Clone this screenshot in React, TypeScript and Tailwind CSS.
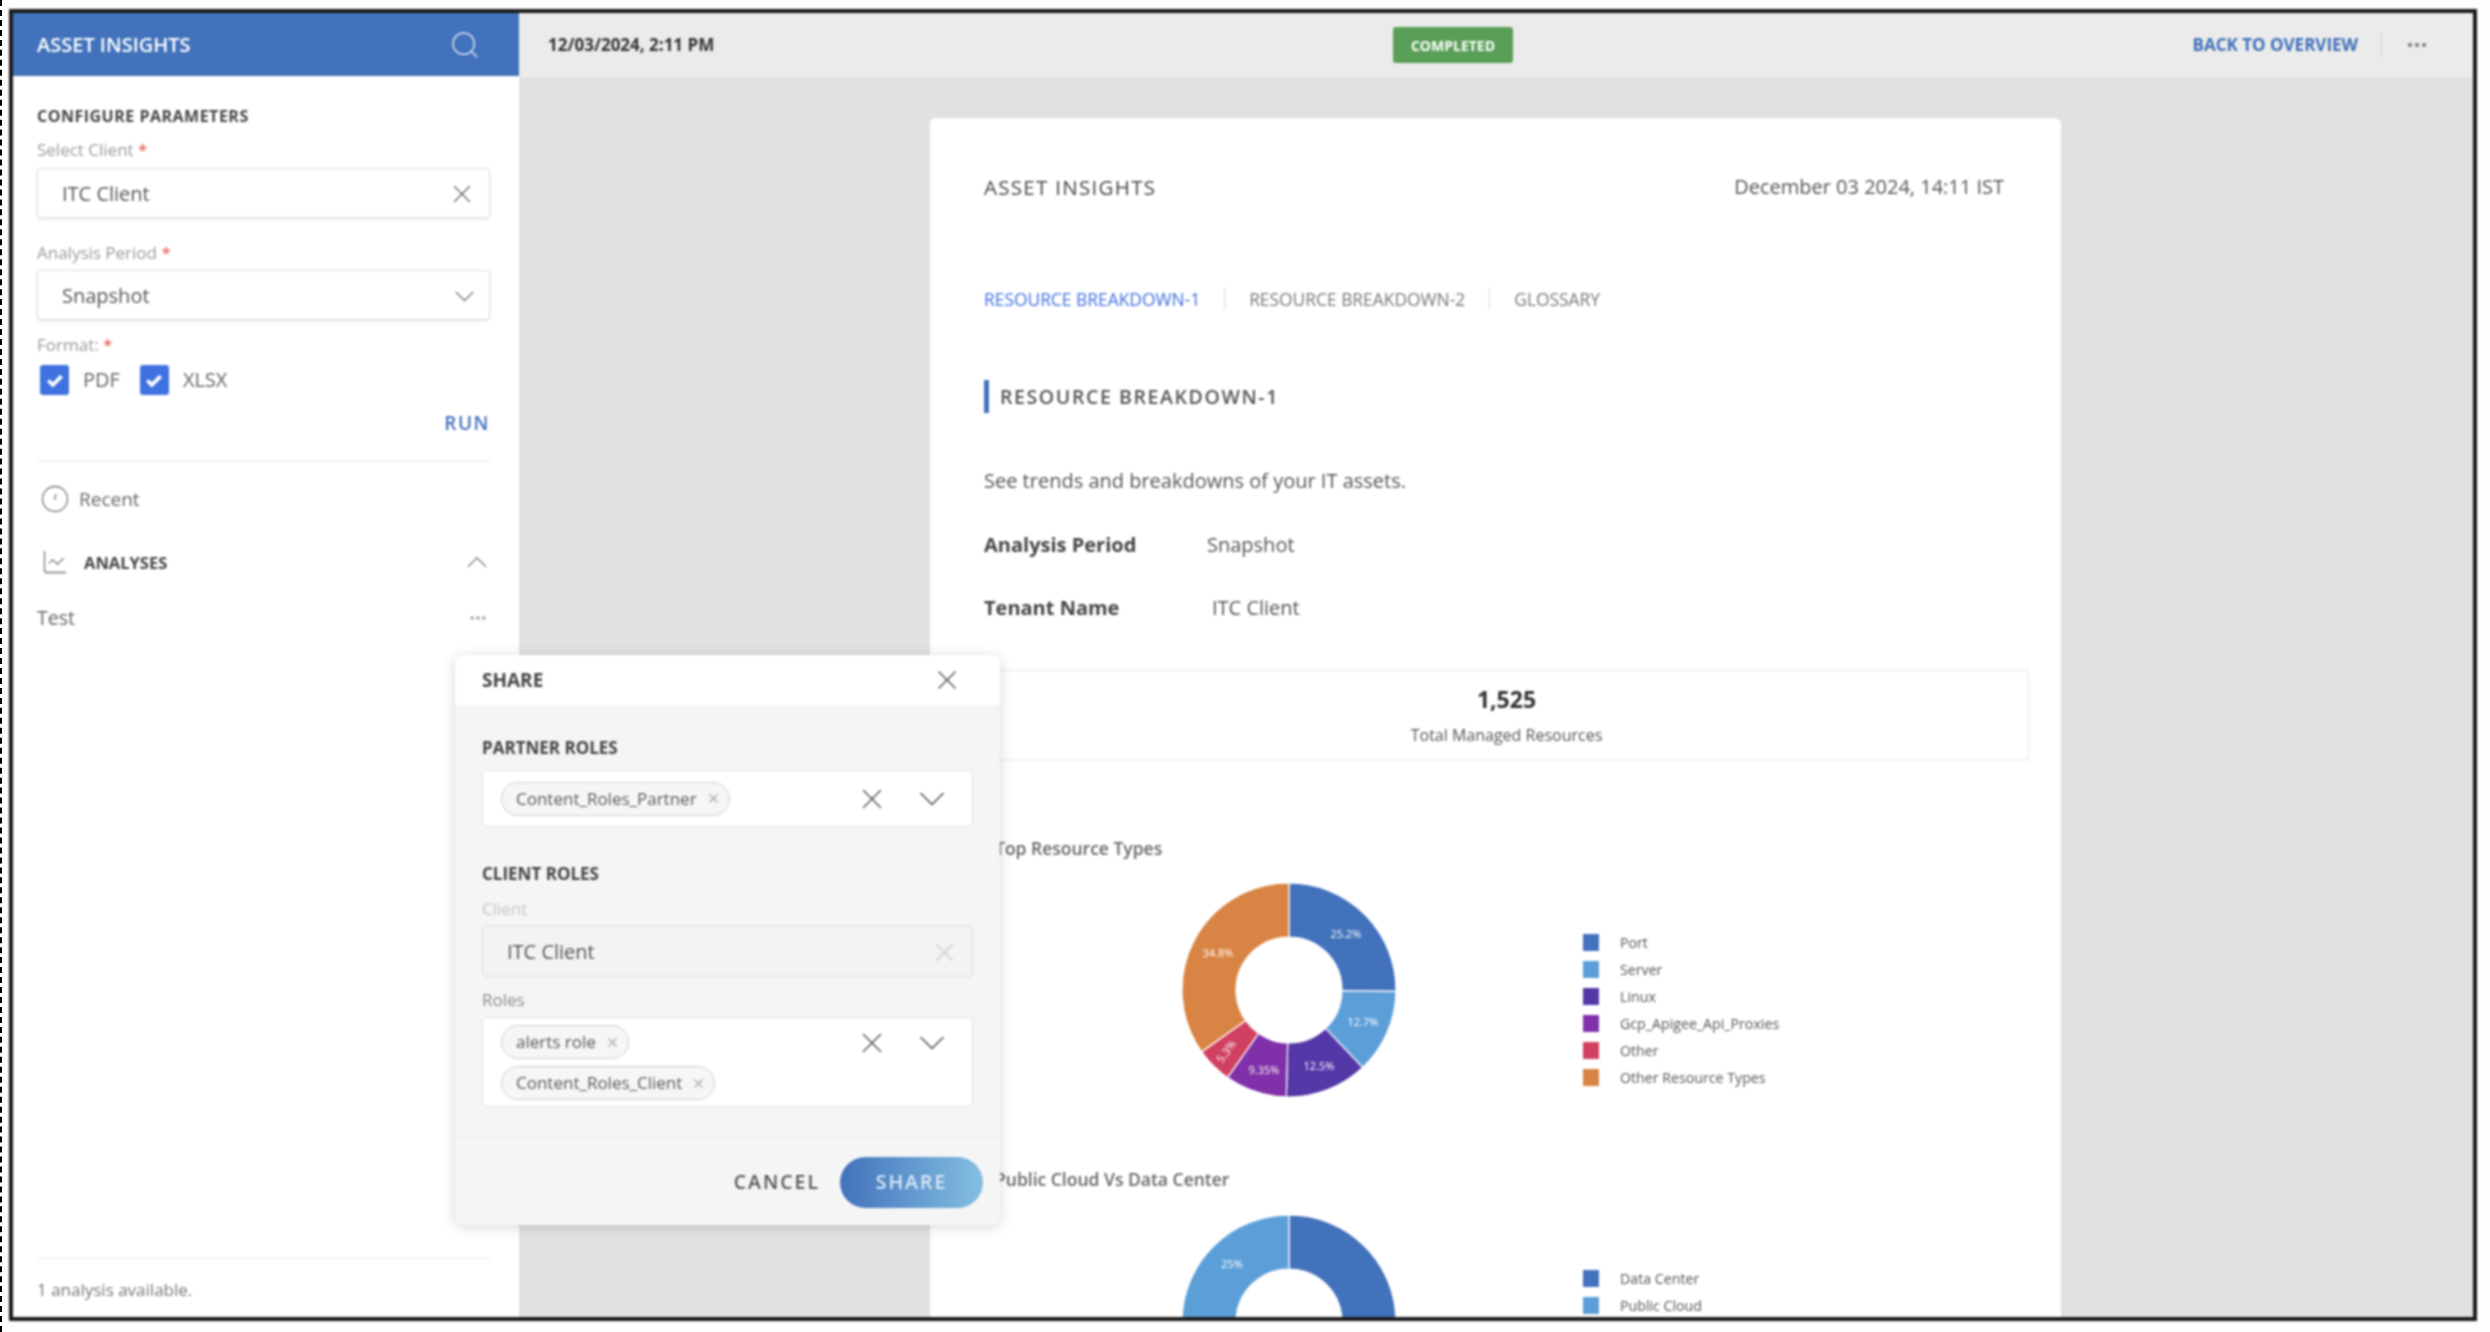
import { ChartLine, ChevronDown, ChevronUp, Ellipsis, Search, X } from "lucide-react";

interface Slice {
  value: number;
  color: string;
}

const TOP_TYPES: Slice[] = [
  { value: 25.2, color: "#4272bb" },
  { value: 12.7, color: "#5c9fd8" },
  { value: 12.5, color: "#5538a8" },
  { value: 9.35, color: "#8030a8" },
  { value: 5.45, color: "#d04060" },
  { value: 34.8, color: "#d88444" },
];

const CLOUD_TYPES: Slice[] = [
  { value: 75, color: "#4272bb" },
  { value: 25, color: "#5c9fd8" },
];

const TOP_LEGEND = [
  { label: "Port", color: "bg-[#4272bb]" },
  { label: "Server", color: "bg-[#5c9fd8]" },
  { label: "Linux", color: "bg-[#5538a8]" },
  { label: "Gcp_Apigee_Api_Proxies", color: "bg-[#8030a8]" },
  { label: "Other", color: "bg-[#d04060]" },
  { label: "Other Resource Types", color: "bg-[#d88444]" },
];

const CLOUD_LEGEND = [
  { label: "Data Center", color: "bg-[#4272bb]" },
  { label: "Public Cloud", color: "bg-[#5c9fd8]" },
];

function arcPath(start: number, end: number) {
  const toPoint = (pct: number, r: number) => {
    const a = (pct / 100) * Math.PI * 2;
    return `${(107 + r * Math.sin(a)).toFixed(2)} ${(107 - r * Math.cos(a)).toFixed(2)}`;
  };
  const large = end - start > 50 ? 1 : 0;
  return `M${toPoint(start, 107)}A107 107 0 ${large} 1 ${toPoint(end, 107)}L${toPoint(end, 53)}A53 53 0 ${large} 0 ${toPoint(start, 53)}Z`;
}

function Donut({ slices, labels }: { slices: Slice[]; labels: { x: number; y: number; text: string; rotate?: number }[] }) {
  let total = 0;
  return (
    <svg width="214" height="214" viewBox="0 0 214 214" className="shrink-0">
      {slices.map((s) => {
        const start = total;
        total += s.value;
        return <path key={s.color} d={arcPath(start, total)} fill={s.color} stroke="#fff" strokeWidth="1.2" />;
      })}
      {labels.map((l) => (
        <text
          key={l.text}
          x={l.x}
          y={l.y}
          fill="#fff"
          fontSize="11"
          textAnchor="middle"
          dominantBaseline="middle"
          transform={l.rotate ? `rotate(${l.rotate} ${l.x} ${l.y})` : undefined}
        >
          {l.text}
        </text>
      ))}
    </svg>
  );
}

function Legend({ items }: { items: { label: string; color: string }[] }) {
  return (
    <div>
      {items.map((item) => (
        <div key={item.label} className="flex h-[27px] items-center">
          <span className={`h-[17px] w-[16px] ${item.color}`} />
          <span className="ml-[21px] text-[14.2px] text-[#555]">{item.label}</span>
        </div>
      ))}
    </div>
  );
}

function Required({ label }: { label: string }) {
  return (
    <div className="text-[17px] leading-5 text-[#9a9a9a]">
      {label} <span className="text-[#e0483e]">*</span>
    </div>
  );
}

function Check({ label }: { label: string }) {
  return (
    <div className="flex items-center">
      <span className="flex h-[30px] w-[29px] items-center justify-center rounded-[3px] bg-[#3f72e0]">
        <svg width="22" height="22" viewBox="0 0 20 20" fill="none" stroke="#fff" strokeWidth="3.4">
          <path d="M4 10.5l4 4 8-8" />
        </svg>
      </span>
      <span className="ml-[14px] text-[20px] text-[#666]">{label}</span>
    </div>
  );
}

function Chip({ label }: { label: string }) {
  return (
    <span className="flex h-[34px] w-fit items-center rounded-full border border-[#cfcfcf] bg-[#f6f6f6] pl-[14px] pr-[8px] text-[17px] text-[#5a5a5a]">
      {label}
      <X size={15} strokeWidth={1.6} className="ml-[9px] text-[#666]" />
    </span>
  );
}

function Sidebar() {
  return (
    <aside className="flex w-[506px] shrink-0 flex-col bg-white">
      <div className="flex h-[63px] items-center justify-between bg-[#4272bb] pl-6 pr-[38px] text-white">
        <span className="text-[20px] font-semibold">ASSET INSIGHTS</span>
        <Search size={32} strokeWidth={1.1} className="text-[#d5e1f2]" />
      </div>
      <div className="flex flex-1 flex-col pl-6 pr-[29px] pt-[30px]">
        <div className="text-[16px] font-bold leading-5 tracking-[0.5px] text-[#444]">CONFIGURE PARAMETERS</div>
        <div className="mt-[14px]">
          <Required label="Select Client" />
        </div>
        <div className="mt-2 flex h-[50px] items-center justify-between rounded border border-[#dedede] pl-6 pr-[12px] pt-[2px] text-[20px] text-[#555] shadow-sm">
          ITC Client
          <X size={30} strokeWidth={1} className="text-[#666]" />
        </div>
        <div className="mt-[25px]">
          <Required label="Analysis Period" />
        </div>
        <div className="mt-[7px] flex h-[50px] items-center justify-between rounded border border-[#dedede] pl-6 pr-[8px] pt-[2px] text-[20px] text-[#555] shadow-sm">
          Snapshot
          <ChevronDown size={33} strokeWidth={1} className="text-[#666]" />
        </div>
        <div className="mt-[15px]">
          <Required label="Format:" />
        </div>
        <div className="ml-[3px] mt-[10px] flex h-[30px] items-center gap-[20px]">
          <Check label="PDF" />
          <Check label="XLSX" />
        </div>
        <div className="mt-[18px] text-right text-[19px] font-semibold leading-5 tracking-[1.5px] text-[#4272bb]">RUN</div>
        <div className="mt-[28px] h-px bg-[#e8e8e8]" />
        <div className="ml-1 mt-[21px] flex h-8 items-center text-[19px] text-[#666]">
          <svg width="28" height="28" viewBox="0 0 28 28" fill="none" stroke="#777" strokeWidth="1.3">
            <circle cx="14" cy="14" r="12.5" />
            <path d="M15 9l-1.5 6" />
          </svg>
          <span className="ml-[10px]">Recent</span>
        </div>
        <div className="ml-1 mt-[31px] flex h-8 items-center justify-between">
          <div className="flex items-center">
            <ChartLine size={28} strokeWidth={1.1} className="text-[#777]" />
            <span className="ml-[15px] pt-[2px] text-[16.5px] font-bold text-[#444]">ANALYSES</span>
          </div>
          <ChevronUp size={34} strokeWidth={1} className="-mr-[4px] text-[#888]" />
        </div>
        <div className="mt-[30px] flex h-5 items-center justify-between text-[19.5px] text-[#666]">
          Test
          <Ellipsis size={20} className="mr-[2px] text-[#999]" />
        </div>
        <div className="mt-auto border-t border-[#eaeaea] pb-[17px] pt-[21px] text-[17px] leading-5 text-[#777]">
          1 analysis available.
        </div>
      </div>
    </aside>
  );
}

function ReportCard() {
  return (
    <div className="ml-[411px] mt-[41px] w-[1131px] rounded-t-md bg-white pl-[54px] pr-8 pt-[59px] font-normal">
      <div className="flex h-5 items-center justify-between pr-[25px]">
        <span className="text-[20.5px] tracking-[1.3px] text-[#444]">ASSET INSIGHTS</span>
        <span className="text-[20px] text-[#555]">December 03 2024, 14:11 IST</span>
      </div>
      <div className="mt-[90px] flex h-6 items-center text-[17.4px] text-[#777]">
        <span className="text-[#3f6fe0]">RESOURCE BREAKDOWN-1</span>
        <span className="mx-[24px] h-[22px] w-px bg-[#d8d8d8]" />
        <span>RESOURCE BREAKDOWN-2</span>
        <span className="mx-[24px] h-[22px] w-px bg-[#d8d8d8]" />
        <span>GLOSSARY</span>
      </div>
      <div className="mt-[69px] flex h-[33px] items-center border-l-[5px] border-[#4272bb] pl-[11px] text-[19.5px] font-semibold tracking-[1.6px] text-[#555]">
        RESOURCE BREAKDOWN-1
      </div>
      <div className="mt-[58px] text-[20px] leading-5 text-[#555]">See trends and breakdowns of your IT assets.</div>
      <div className="mt-[44px] flex text-[20px] leading-5 text-[#555]">
        <span className="w-[223px] font-bold text-[#444]">Analysis Period</span>
        Snapshot
      </div>
      <div className="mt-[43px] flex text-[20px] leading-5 text-[#555]">
        <span className="w-[228px] font-bold text-[#444]">Tenant Name</span>
        ITC Client
      </div>
      <div className="mt-[52px] flex h-[90px] flex-col items-center border border-[#e6e6e6] pt-[14px]">
        <span className="text-[23px] font-bold leading-7 text-[#333]">1,525</span>
        <span className="mt-[12px] text-[16px] leading-5 text-[#555]">Total Managed Resources</span>
      </div>
      <div className="ml-[11px] mt-[78px] text-[17.5px] font-semibold leading-5 text-[#666]">Top Resource Types</div>
      <div className="ml-[198px] mt-[25px] flex items-start">
        <Donut
          slices={TOP_TYPES}
          labels={[
            { x: 164, y: 52, text: "25.2%" },
            { x: 181, y: 140, text: "12.7%" },
            { x: 137, y: 184, text: "12.5%" },
            { x: 82, y: 188, text: "9.35%" },
            { x: 45, y: 169, text: "5.3%", rotate: -55 },
            { x: 36, y: 71, text: "34.8%" },
          ]}
        />
        <div className="ml-[187px] mt-[46px]">
          <Legend items={TOP_LEGEND} />
        </div>
      </div>
      <div className="ml-[11px] mt-[72px] text-[17.5px] font-semibold leading-5 text-[#666]">Public Cloud Vs Data Center</div>
      <div className="ml-[198px] mt-[26px] flex items-start">
        <Donut slices={CLOUD_TYPES} labels={[{ x: 50, y: 50, text: "25%" }]} />
        <div className="ml-[187px] mt-[50px]">
          <Legend items={CLOUD_LEGEND} />
        </div>
      </div>
    </div>
  );
}

function ShareDialog() {
  return (
    <div className="absolute left-[442px] top-[642px] flex h-[570px] w-[545px] flex-col overflow-hidden rounded-lg bg-[#f5f5f5] shadow-[0_2px_14px_rgba(0,0,0,0.16)]">
      <div className="flex h-[50px] shrink-0 items-center justify-between bg-white pl-[27px] pr-[37px]">
        <span className="text-[19px] font-bold text-[#444]">SHARE</span>
        <X size={32} strokeWidth={1} className="text-[#555]" />
      </div>
      <div className="px-[27px] pt-[33px]">
        <div className="text-[17px] font-bold leading-5 text-[#444]">PARTNER ROLES</div>
        <div className="mt-[12px] flex h-[57px] items-center justify-between rounded border border-[#e2e2e2] bg-white pl-[18px] pr-[18px]">
          <Chip label="Content_Roles_Partner" />
          <div className="flex items-center gap-[21px] text-[#555]">
            <X size={34} strokeWidth={1} />
            <ChevronDown size={44} strokeWidth={0.9} />
          </div>
        </div>
        <div className="mt-[37px] text-[17px] font-bold leading-5 text-[#444]">CLIENT ROLES</div>
        <div className="mt-[15px] text-[17px] leading-5 text-[#c4c4c4]">Client</div>
        <div className="mt-[6px] flex h-[52px] items-center justify-between rounded border border-[#dedede] bg-[#f3f3f3] pl-[24px] pr-[12px] pt-[2px] text-[20px] text-[#555]">
          ITC Client
          <X size={31} strokeWidth={1} className="text-[#c9c9c9]" />
        </div>
        <div className="mt-[13px] text-[17px] leading-5 text-[#8a8a8a]">Roles</div>
        <div className="mt-[7px] flex h-[90px] items-start justify-between rounded border border-[#e2e2e2] bg-white pl-[18px] pr-[18px] pt-[7px]">
          <div className="flex flex-col gap-[7px]">
            <Chip label="alerts role" />
            <Chip label="Content_Roles_Client" />
          </div>
          <div className="-mt-[4px] flex items-center gap-[21px] text-[#555]">
            <X size={34} strokeWidth={1} />
            <ChevronDown size={44} strokeWidth={0.9} />
          </div>
        </div>
      </div>
      <div className="mt-[29px] flex flex-1 items-start justify-end gap-[20px] border-t border-[#ebebeb] pr-[17px] pt-[20px]">
        <span className="flex h-[49px] items-center text-[19.5px] font-semibold tracking-[2px] text-[#555]">CANCEL</span>
        <span className="flex h-[51px] w-[143px] items-center justify-center rounded-full bg-linear-to-r from-[#4272bb] to-[#85bfe2] pb-[2px] text-[19.5px] font-semibold tracking-[2px] text-[#dbe8f6]">
          SHARE
        </span>
      </div>
    </div>
  );
}

export default function App() {
  return (
    <div className="h-[1332px] w-[2490px] overflow-hidden border-l-2 border-dashed border-black bg-[#fdfdfd] pl-[7px] pt-[9px] font-['Open_Sans',sans-serif]">
      <div className="relative flex h-[1312px] w-[2468px] overflow-hidden border-4 border-[#1a1a1a] blur-[1.2px]">
        <Sidebar />
        <main className="flex min-w-0 flex-1 flex-col bg-[#e1e1e1]">
          <div className="grid h-[64px] shrink-0 grid-cols-[874px_120px_1fr] items-center bg-[#ebebeb]">
            <span className="pl-[29px] text-[17px] font-bold text-[#333]">12/03/2024, 2:11 PM</span>
            <span className="flex h-9 items-center justify-center rounded-[3px] bg-[#5a9f58] text-[14px] font-bold text-white">
              COMPLETED
            </span>
            <div className="flex items-center justify-end pr-[44px]">
              <span className="text-[17px] font-bold text-[#3f6fb8]">BACK TO OVERVIEW</span>
              <span className="mx-[23px] h-[24px] w-px bg-[#d2d2d2]" />
              <Ellipsis size={24} className="text-[#777]" />
            </div>
          </div>
          <div className="min-h-0 flex-1 overflow-hidden">
            <ReportCard />
          </div>
        </main>
        <ShareDialog />
      </div>
    </div>
  );
}
